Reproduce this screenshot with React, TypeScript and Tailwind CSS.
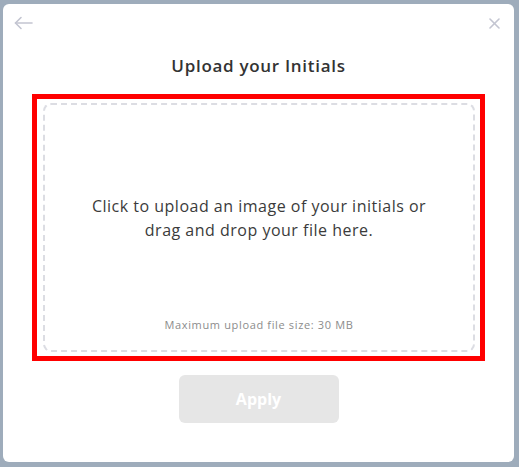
import React from 'react';

const font = { fontFamily: '"Open Sans", "Noto Sans", sans-serif' };

export default function App() {
  return (
    <div className="w-[519px] h-[467px] bg-[#9eacbb] pt-[4px] pl-[3px]" style={font}>
      <div className="w-[511px] h-[458px] bg-white rounded-[6px] flex flex-col items-center">
        {/* top bar */}
        <div className="w-full h-[38px] flex items-center justify-between pl-[11px] pr-[14px]">
          <button className="text-[#c3c5d1]">
            <svg width="19" height="14" viewBox="0 0 19 14" fill="none" stroke="currentColor" strokeWidth="1.6" strokeLinecap="round" strokeLinejoin="round">
              <path d="M18 7H1.5" />
              <path d="M7 1.5L1.5 7L7 12.5" />
            </svg>
          </button>
          <button className="text-[#c3c5d1]">
            <svg width="11" height="11" viewBox="0 0 11 11" fill="none" stroke="currentColor" strokeWidth="1.6" strokeLinecap="round">
              <path d="M1 1L10 10" />
              <path d="M10 1L1 10" />
            </svg>
          </button>
        </div>

        <h1 className="mt-[12px] text-[17px] leading-[24px] font-semibold tracking-[0.7px] text-[#333333]">
          Upload your Initials
        </h1>

        {/* highlighted drop zone */}
        <div className="mt-[16px] w-[453px] h-[267px] border-[5px] border-[#ff0000] pt-[4px] pb-[4px] pl-[6px] pr-[5px]">
          <div className="w-full h-full border-2 border-dashed border-[#dcdde3] rounded-lg flex flex-col items-center pt-[89px] pb-[17px] cursor-pointer">
            <p className="text-[16px] leading-[24px] tracking-[0.5px] text-[#3b3b3b] text-center">
              Click to upload an image of your initials or
              <br />
              drag and drop your file here.
            </p>
            <p className="mt-auto text-[11px] leading-[16px] tracking-[0.65px] text-[#8c8c8c]">
              Maximum upload file size: 30 MB
            </p>
          </div>
        </div>

        <button
          disabled
          className="mt-[14px] w-[160px] h-[48px] rounded-md bg-[#e6e6e6] text-white text-[16px] font-bold"
        >
          Apply
        </button>
      </div>
    </div>
  );
}
